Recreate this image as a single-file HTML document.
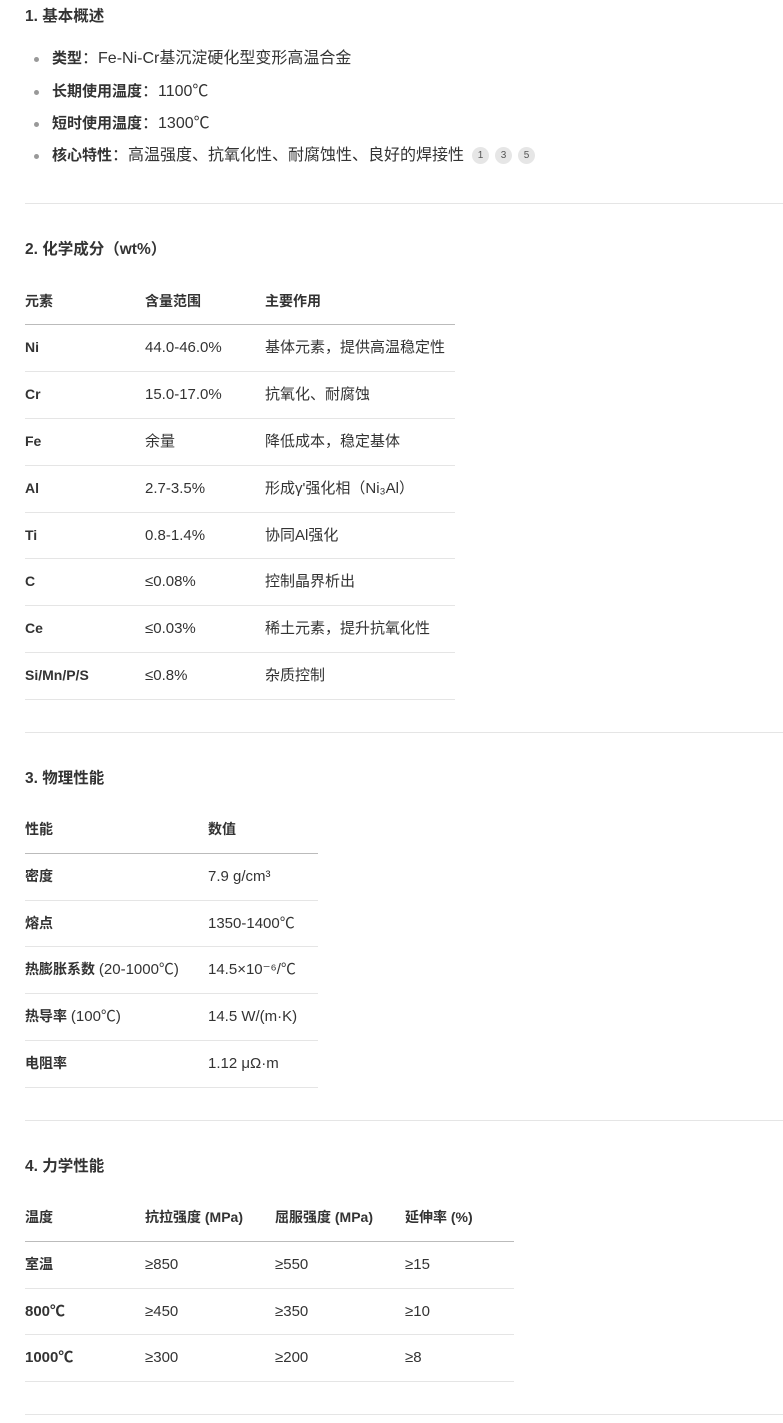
<!DOCTYPE html>
<html><head><meta charset="utf-8"><style>
body{margin:0;width:783px;height:1423px;background:#fff;position:relative;overflow:hidden;font-family:"Liberation Sans","Noto Sans CJK SC",sans-serif;color:#333;font-size:15px}
.t{position:absolute;height:20px;line-height:20px;white-space:nowrap}
.b{font-weight:bold;font-size:14px}
.h{font-size:15.5px;font-weight:bold}
.l{position:absolute;height:1px;background:#e5e5e5}
.hl{position:absolute;height:1px;background:#bbb}
.dot{position:absolute;width:5px;height:5px;border-radius:50%;background:#999}
.bd{position:absolute;width:17px;height:17px;border-radius:50%;background:#e6e6e6;font-size:10px;line-height:17px;text-align:center;color:#555}
.u{font-size:16px}
.u b{font-size:15px}
</style></head><body>
<div class="t h" style="left:25px;top:7px">1. 基本概述</div>
<div class="dot" style="left:34px;top:57px"></div>
<div class="t u" style="left:52px;top:49px"><b>类型</b>：Fe-Ni-Cr基沉淀硬化型变形高温合金</div>
<div class="dot" style="left:34px;top:90px"></div>
<div class="t u" style="left:52px;top:82px"><b>长期使用温度</b>：1100℃</div>
<div class="dot" style="left:34px;top:122px"></div>
<div class="t u" style="left:52px;top:114px"><b>短时使用温度</b>：1300℃</div>
<div class="dot" style="left:34px;top:154px"></div>
<div class="t u" style="left:52px;top:146px"><b>核心特性</b>：高温强度、抗氧化性、耐腐蚀性、良好的焊接性</div>
<div class="bd" style="left:472px;top:147px">1</div><div class="bd" style="left:495px;top:147px">3</div><div class="bd" style="left:518px;top:147px">5</div>
<div class="l" style="left:25px;top:203px;width:758px"></div>

<div class="t h" style="left:25px;top:240px">2. 化学成分（wt%）</div>
<div class="t b" style="left:25px;top:291px">元素</div><div class="t b" style="left:145px;top:291px">含量范围</div><div class="t b" style="left:265px;top:291px">主要作用</div>
<div class="hl" style="left:25px;top:324px;width:430px"></div>
<div class="t b" style="left:25px;top:337px">Ni</div><div class="t" style="left:145px;top:338px">44.0-46.0%</div><div class="t" style="left:265px;top:338px">基体元素，提供高温稳定性</div>
<div class="l" style="left:25px;top:371px;width:430px"></div>
<div class="t b" style="left:25px;top:384px">Cr</div><div class="t" style="left:145px;top:385px">15.0-17.0%</div><div class="t" style="left:265px;top:385px">抗氧化、耐腐蚀</div>
<div class="l" style="left:25px;top:418px;width:430px"></div>
<div class="t b" style="left:25px;top:431px">Fe</div><div class="t" style="left:145px;top:432px">余量</div><div class="t" style="left:265px;top:432px">降低成本，稳定基体</div>
<div class="l" style="left:25px;top:465px;width:430px"></div>
<div class="t b" style="left:25px;top:478px">Al</div><div class="t" style="left:145px;top:479px">2.7-3.5%</div><div class="t" style="left:265px;top:479px">形成γ'强化相（Ni₃Al）</div>
<div class="l" style="left:25px;top:512px;width:430px"></div>
<div class="t b" style="left:25px;top:525px">Ti</div><div class="t" style="left:145px;top:526px">0.8-1.4%</div><div class="t" style="left:265px;top:526px">协同Al强化</div>
<div class="l" style="left:25px;top:558px;width:430px"></div>
<div class="t b" style="left:25px;top:571px">C</div><div class="t" style="left:145px;top:572px">≤0.08%</div><div class="t" style="left:265px;top:572px">控制晶界析出</div>
<div class="l" style="left:25px;top:605px;width:430px"></div>
<div class="t b" style="left:25px;top:618px">Ce</div><div class="t" style="left:145px;top:619px">≤0.03%</div><div class="t" style="left:265px;top:619px">稀土元素，提升抗氧化性</div>
<div class="l" style="left:25px;top:652px;width:430px"></div>
<div class="t b" style="left:25px;top:665px">Si/Mn/P/S</div><div class="t" style="left:145px;top:666px">≤0.8%</div><div class="t" style="left:265px;top:666px">杂质控制</div>
<div class="l" style="left:25px;top:699px;width:430px"></div>
<div class="l" style="left:25px;top:732px;width:758px"></div>

<div class="t h" style="left:25px;top:769px">3. 物理性能</div>
<div class="t b" style="left:25px;top:819px">性能</div><div class="t b" style="left:208px;top:819px">数值</div>
<div class="hl" style="left:25px;top:853px;width:293px"></div>
<div class="t" style="left:25px;top:866px;font-size:14px"><b>密度</b></div><div class="t" style="left:208px;top:867px">7.9 g/cm³</div>
<div class="l" style="left:25px;top:900px;width:293px"></div>
<div class="t" style="left:25px;top:913px;font-size:14px"><b>熔点</b></div><div class="t" style="left:208px;top:914px">1350-1400℃</div>
<div class="l" style="left:25px;top:946px;width:293px"></div>
<div class="t" style="left:25px;top:959px;font-size:14px"><b>热膨胀系数</b> <span style="font-size:15px">(20-1000℃)</span></div><div class="t" style="left:208px;top:960px">14.5×10⁻⁶/℃</div>
<div class="l" style="left:25px;top:993px;width:293px"></div>
<div class="t" style="left:25px;top:1006px;font-size:14px"><b>热导率</b> <span style="font-size:15px">(100℃)</span></div><div class="t" style="left:208px;top:1007px">14.5 W/(m·K)</div>
<div class="l" style="left:25px;top:1040px;width:293px"></div>
<div class="t" style="left:25px;top:1053px;font-size:14px"><b>电阻率</b></div><div class="t" style="left:208px;top:1054px">1.12 μΩ·m</div>
<div class="l" style="left:25px;top:1087px;width:293px"></div>
<div class="l" style="left:25px;top:1120px;width:758px"></div>

<div class="t h" style="left:25px;top:1157px">4. 力学性能</div>
<div class="t b" style="left:25px;top:1207px">温度</div><div class="t b" style="left:145px;top:1207px">抗拉强度 (MPa)</div><div class="t b" style="left:275px;top:1207px">屈服强度 (MPa)</div><div class="t b" style="left:405px;top:1207px">延伸率 (%)</div>
<div class="hl" style="left:25px;top:1241px;width:489px"></div>
<div class="t b" style="left:25px;top:1254px">室温</div><div class="t" style="left:145px;top:1255px">≥850</div><div class="t" style="left:275px;top:1255px">≥550</div><div class="t" style="left:405px;top:1255px">≥15</div>
<div class="l" style="left:25px;top:1288px;width:489px"></div>
<div class="t b" style="left:25px;top:1302px;font-size:15px">800℃</div><div class="t" style="left:145px;top:1302px">≥450</div><div class="t" style="left:275px;top:1302px">≥350</div><div class="t" style="left:405px;top:1302px">≥10</div>
<div class="l" style="left:25px;top:1334px;width:489px"></div>
<div class="t b" style="left:25px;top:1348px;font-size:15px">1000℃</div><div class="t" style="left:145px;top:1348px">≥300</div><div class="t" style="left:275px;top:1348px">≥200</div><div class="t" style="left:405px;top:1348px">≥8</div>
<div class="l" style="left:25px;top:1381px;width:489px"></div>
<div class="l" style="left:25px;top:1414px;width:758px"></div>
</body></html>
